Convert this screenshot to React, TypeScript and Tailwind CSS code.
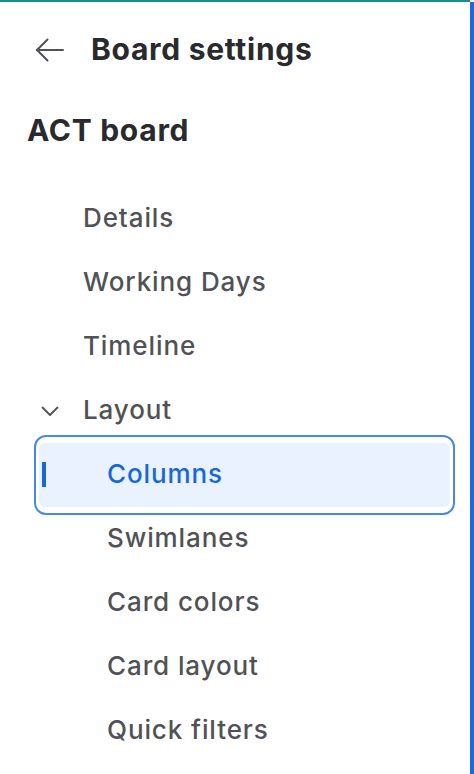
import React from "react";

const items = ["Details", "Working Days", "Timeline"];
const sub = ["Swimlanes", "Card colors", "Card layout", "Quick filters"];

export default function App() {
  return (
    <div
      className="flex h-[774px] w-[474px] overflow-hidden bg-white"
      style={{ fontFamily: "Inter, 'Noto Sans', sans-serif" }}
    >
      <div className="flex flex-1 flex-col border-t-2 border-[#1a8d8f]">
        <div className="mt-[23px] flex h-[48px] items-center">
          <svg
            width="30"
            height="24"
            viewBox="0 0 30 24"
            className="ml-[35px] mt-[1px] shrink-0"
            fill="none"
            stroke="#505258"
            strokeWidth="2"
            strokeLinecap="round"
            strokeLinejoin="round"
          >
            <path d="M2 12H28" />
            <path d="M12.5 1.5L2 12l10.5 10.5" />
          </svg>
          <span className="ml-[26px] text-[30px] font-bold tracking-[0.7px] text-[#292a2e]">
            Board settings
          </span>
        </div>
        <div className="mt-[33px] flex h-[48px] items-center pl-[27px] text-[30px] font-bold tracking-[0.7px] text-[#292a2e]">
          ACT board
        </div>
        <div className="ml-[39px] mt-[33px] flex w-[411px] flex-col text-[26px] font-medium tracking-[0.9px] text-[#505258]">
          {items.map((t) => (
            <div key={t} className="flex h-16 items-center pb-[4px] pl-[44px]">
              {t}
            </div>
          ))}
          <div className="flex h-16 items-center">
            <svg
              width="20"
              height="20"
              viewBox="0 0 20 20"
              className="ml-[1px] shrink-0"
              fill="none"
              stroke="#505258"
              strokeWidth="1.8"
              strokeLinecap="round"
              strokeLinejoin="round"
            >
              <path d="M2.5 6.5L10 14l7.5-7.5" />
            </svg>
            <span className="mb-[4px] ml-[23px]">Layout</span>
          </div>
          <div className="relative flex h-16 items-center rounded-[6px] bg-[#e9f2fe] pb-[4px] pl-[68px] text-[#1868db]">
            <div className="pointer-events-none absolute -bottom-[8px] -left-[5px] -right-[5px] -top-[8px] rounded-[12px] border-[2.5px] border-[#4688ec]" />
            <div className="absolute left-[3px] top-[19px] h-[25px] w-[4px] bg-[#1868db]" />
            Columns
          </div>
          {sub.map((t) => (
            <div key={t} className="flex h-16 items-center pb-[4px] pl-[68px]">
              {t}
            </div>
          ))}
        </div>
      </div>
      <div className="mt-[2px] w-[4px] bg-[#1d68dd]" />
    </div>
  );
}
